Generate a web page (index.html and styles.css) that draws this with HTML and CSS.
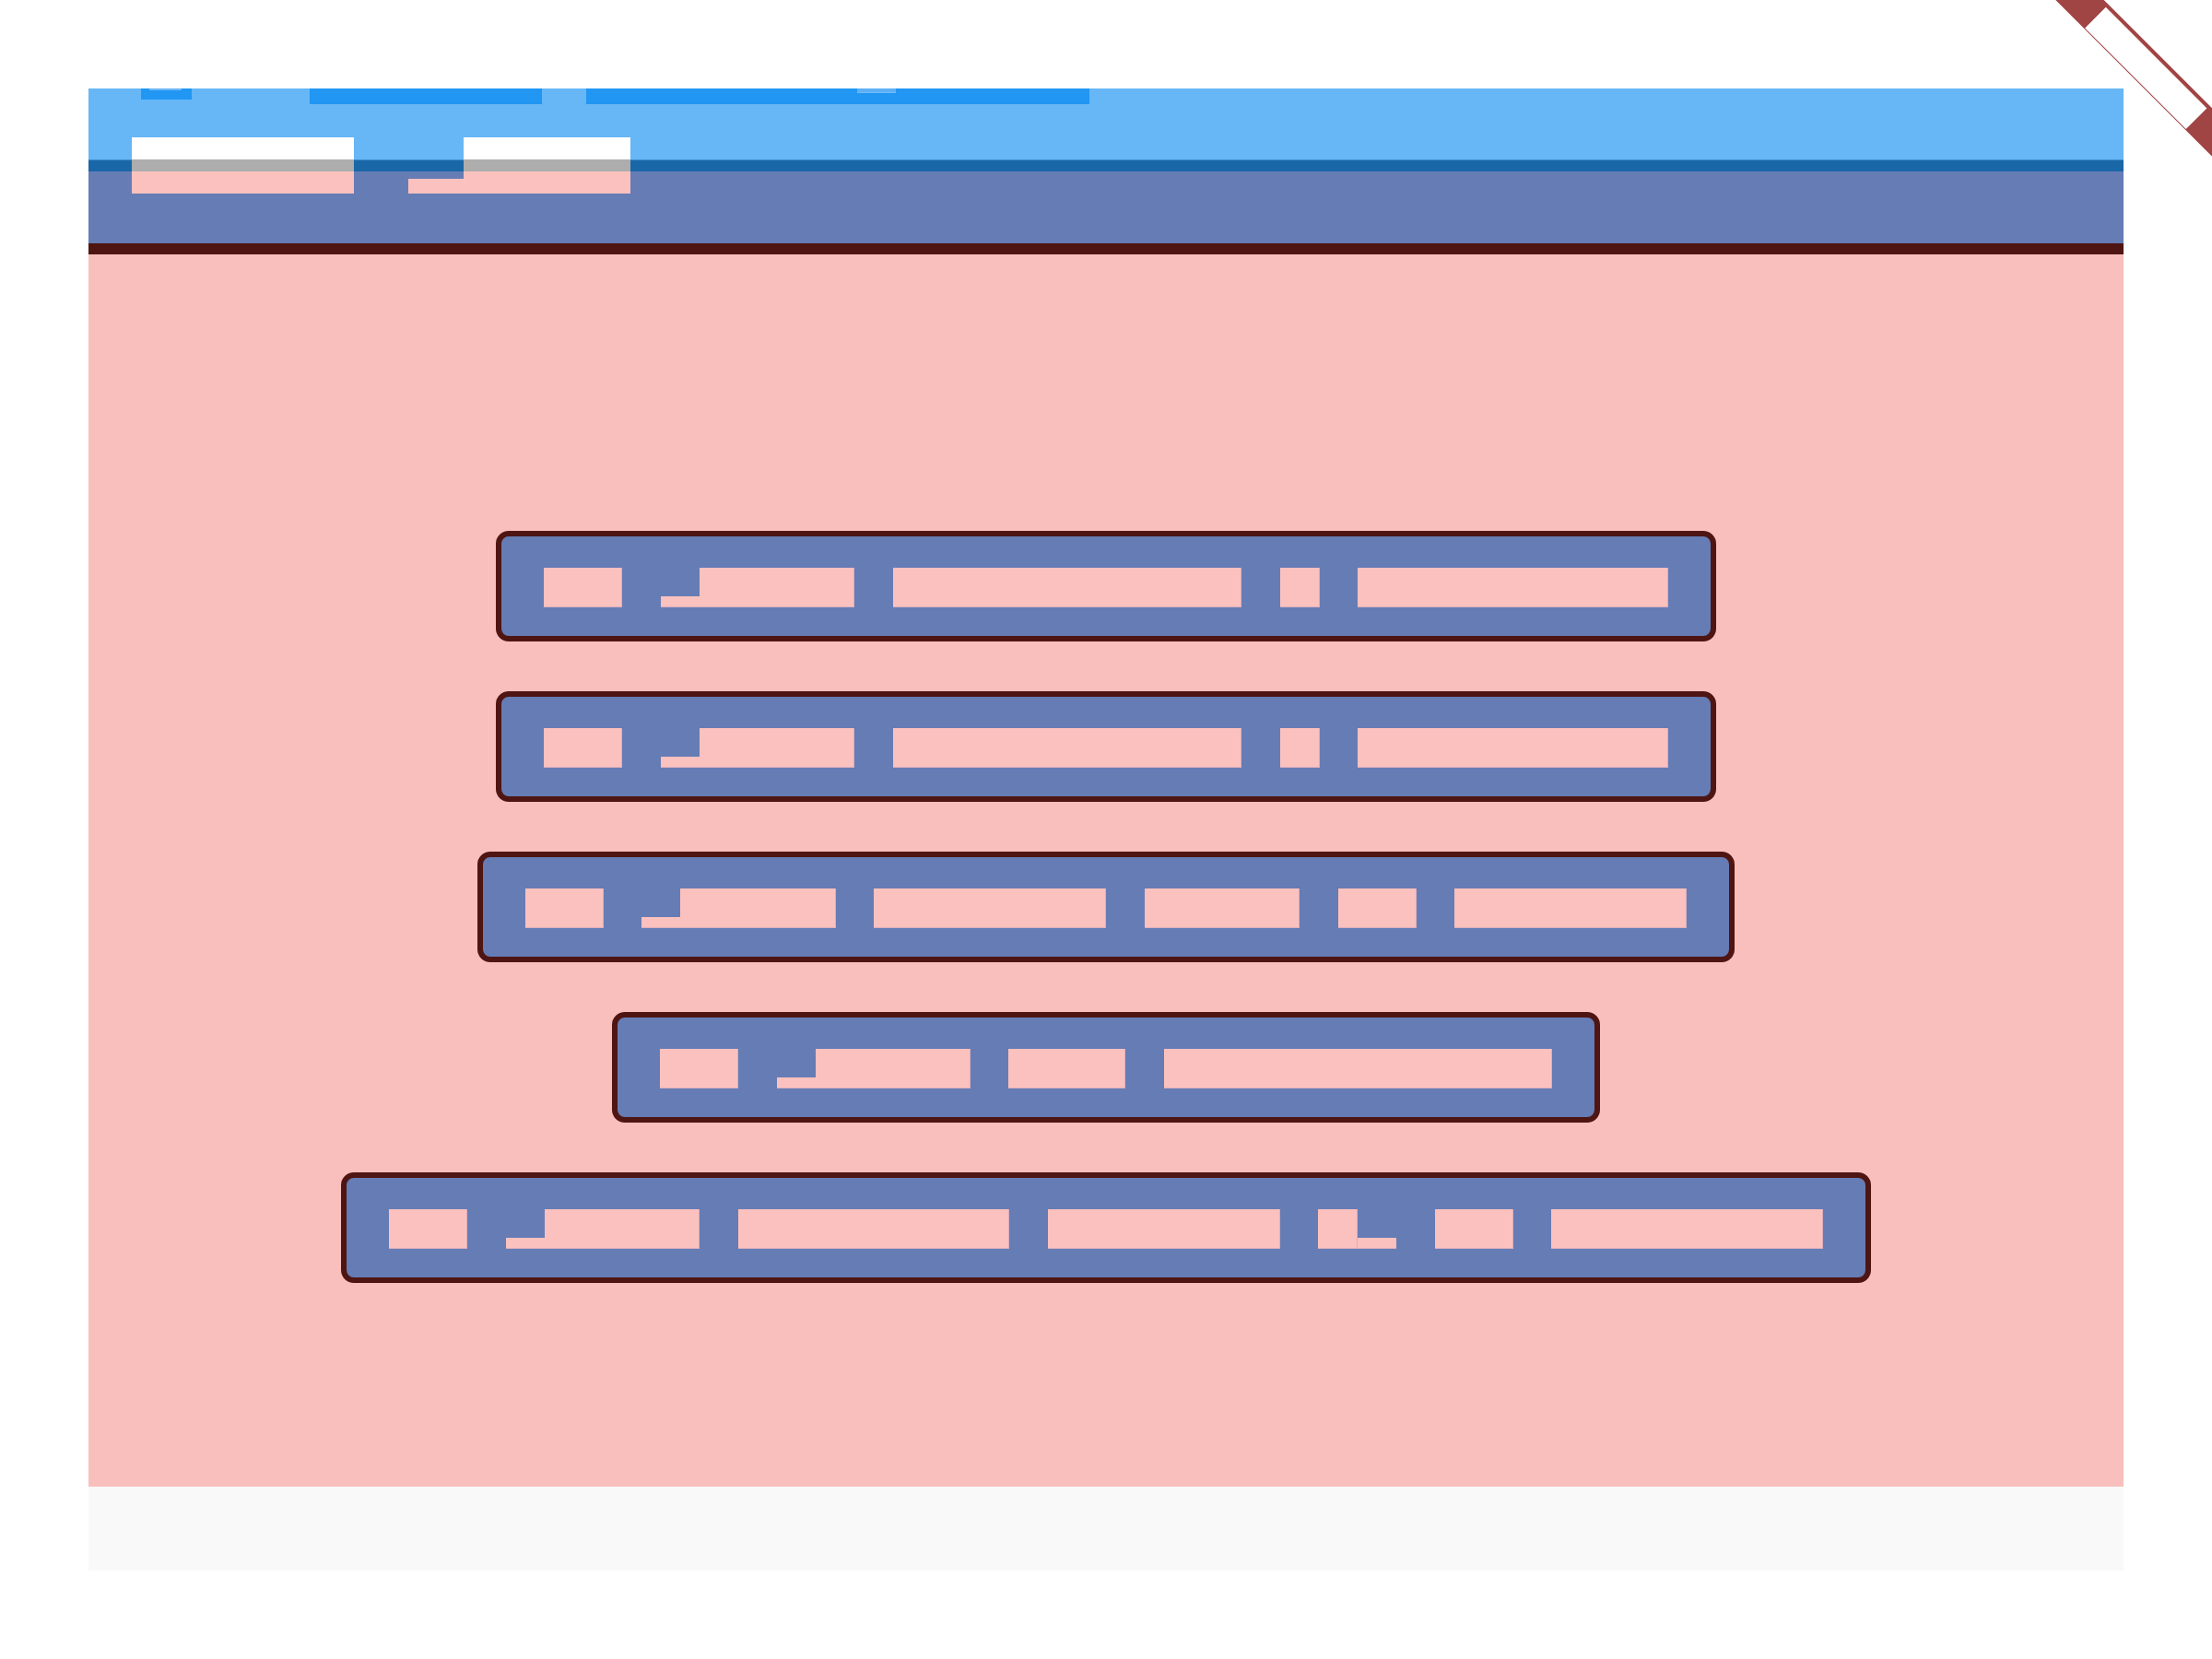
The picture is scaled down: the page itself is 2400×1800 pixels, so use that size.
FILE: index.html
```html
<!DOCTYPE html>
<html lang="en">
<head>
<meta charset="utf-8">
<title>Layout</title>
<link rel="stylesheet" href="styles.css">
</head>
<body>
<div class="page">
  <header class="hdr">
    <div class="band-top">
      <span class="tab tab-s"><span class="tab-mark mark-s"></span></span>
      <span class="tab tab-m"></span>
      <span class="tab tab-l"><span class="tab-mark mark-l"></span></span>
    </div>
    <div class="band-strip"></div>
    <div class="band-nav"></div>
    <div class="band-rule"></div>
    <nav class="nav">
      <span class="nav-item nav-w4"></span>
      <span class="nav-word">
        <span class="nav-low"></span>
        <span class="nav-item nav-w3"></span>
      </span>
    </nav>
  </header>

  <main class="main">
    <div class="row">
      <span class="blk w2"></span>
      <span class="word"><span class="low"></span><span class="blk w4"></span></span>
      <span class="blk w9"></span>
      <span class="blk w1"></span>
      <span class="blk w8"></span>
    </div>
    <div class="row">
      <span class="blk w2"></span>
      <span class="word"><span class="low"></span><span class="blk w4"></span></span>
      <span class="blk w9"></span>
      <span class="blk w1"></span>
      <span class="blk w8"></span>
    </div>
    <div class="row">
      <span class="blk w2"></span>
      <span class="word"><span class="low"></span><span class="blk w4"></span></span>
      <span class="blk w6"></span>
      <span class="blk w4"></span>
      <span class="blk w2"></span>
      <span class="blk w6"></span>
    </div>
    <div class="row">
      <span class="blk w2"></span>
      <span class="word"><span class="low"></span><span class="blk w4"></span></span>
      <span class="blk w3"></span>
      <span class="blk w10"></span>
    </div>
    <div class="row">
      <span class="blk w2"></span>
      <span class="word"><span class="low"></span><span class="blk w4"></span></span>
      <span class="blk w7"></span>
      <span class="blk w6"></span>
      <span class="word"><span class="blk w1"></span><span class="low"></span></span>
      <span class="blk w2"></span>
      <span class="blk w7"></span>
    </div>
  </main>

  <footer class="foot"></footer>
</div>

<div class="ribbon"><span class="ribbon-text"></span></div>
</body>
</html>
```

FILE: styles.css
```css
html, body {
  margin: 0;
  padding: 0;
  background: #ffffff;
  overflow: hidden;
  font-family: "Liberation Sans", Arial, sans-serif;
}

.page {
  width: 2208px;
  margin: 96px 0 0 96px;
}

/* ---------- header ---------- */
.hdr {
  position: relative;
  display: flex;
  flex-direction: column;
}

.band-top {
  height: 77px;
  background: #67b6f6;
  display: flex;
  align-items: flex-start;
  padding-left: 57px;
  box-sizing: border-box;
}

.tab {
  display: block;
  position: relative;
  background: #2196f3;
  flex: none;
}
.tab-s { width: 55px; height: 12px; }
.tab-m { width: 252px; height: 17px; margin-left: 128px; }
.tab-l { width: 546px; height: 17px; margin-left: 48px; }

.tab-mark {
  position: absolute;
  top: 0;
  background: #5eb0f5;
  box-shadow: inset 0 -1px 0 rgba(120, 190, 250, 0.8);
}
.mark-s { left: 9px; width: 35px; height: 2px; }
.mark-l { left: 294px; width: 42px; height: 5px; }

.band-strip {
  height: 13px;
  background: #1a67a7;
  box-shadow: inset 0 1px 0 #3f8fd0;
}

.band-nav {
  height: 78px;
  background: #667cb5;
}

.band-rule {
  height: 12px;
  background: #4e1512;
}

.nav {
  position: absolute;
  top: 53px;
  left: 47px;
  display: flex;
  align-items: flex-end;
  gap: 59px;
}

.nav-item {
  display: block;
  height: 61px;
  background: linear-gradient(to bottom, #ffffff 0 24px, #adadad 24px 37px, #fbc1be 37px 61px);
}
.nav-w4 { width: 241px; }
.nav-w3 { width: 181px; }

.nav-word {
  display: flex;
  align-items: flex-end;
}
.nav-low {
  display: block;
  width: 60px;
  height: 16px;
  background: #fbc1be;
}

/* ---------- main ---------- */
.main {
  height: 1337px;
  box-sizing: border-box;
  background: #f8bfbc;
  padding-top: 300px;
  display: flex;
  flex-direction: column;
  align-items: center;
  gap: 54px;
}

.row {
  display: flex;
  align-items: flex-end;
  gap: 41.5px;
  height: 120px;
  box-sizing: border-box;
  padding: 34px 46px 31px;
  border: 6px solid #4e1512;
  border-radius: 14px;
  background: #667cb5;
}

.blk {
  display: block;
  height: 43px;
  background: #fbc1be;
  box-shadow: inset -1px -1px 0 rgba(180, 150, 190, 0.45);
  flex: none;
}

.word {
  display: flex;
  align-items: flex-end;
  flex: none;
}
.low {
  display: block;
  width: 42.1px;
  height: 12px;
  background: #fbc1be;
  box-shadow: inset 0 -1px 0 rgba(180, 150, 190, 0.45);
}

.w1 { width: 42.9px; }
.w2 { width: 85px; }
.w3 { width: 127px; }
.w4 { width: 168.4px; }
.w6 { width: 252.3px; }
.w7 { width: 294.5px; }
.w8 { width: 336.6px; }
.w9 { width: 378.6px; }
.w10 { width: 421px; }

/* ---------- footer ---------- */
.foot {
  height: 91px;
  background: #f9f9f9;
}

/* ---------- corner ribbon ---------- */
.ribbon {
  position: absolute;
  left: 2128.5px;
  top: 53.5px;
  width: 400px;
  height: 37px;
  background: #a04444;
  transform: rotate(45deg);
  display: flex;
  justify-content: center;
  align-items: flex-start;
}
.ribbon-text {
  display: block;
  width: 155px;
  height: 32px;
  margin-top: 3.5px;
  background: #ffffff;
}
```
